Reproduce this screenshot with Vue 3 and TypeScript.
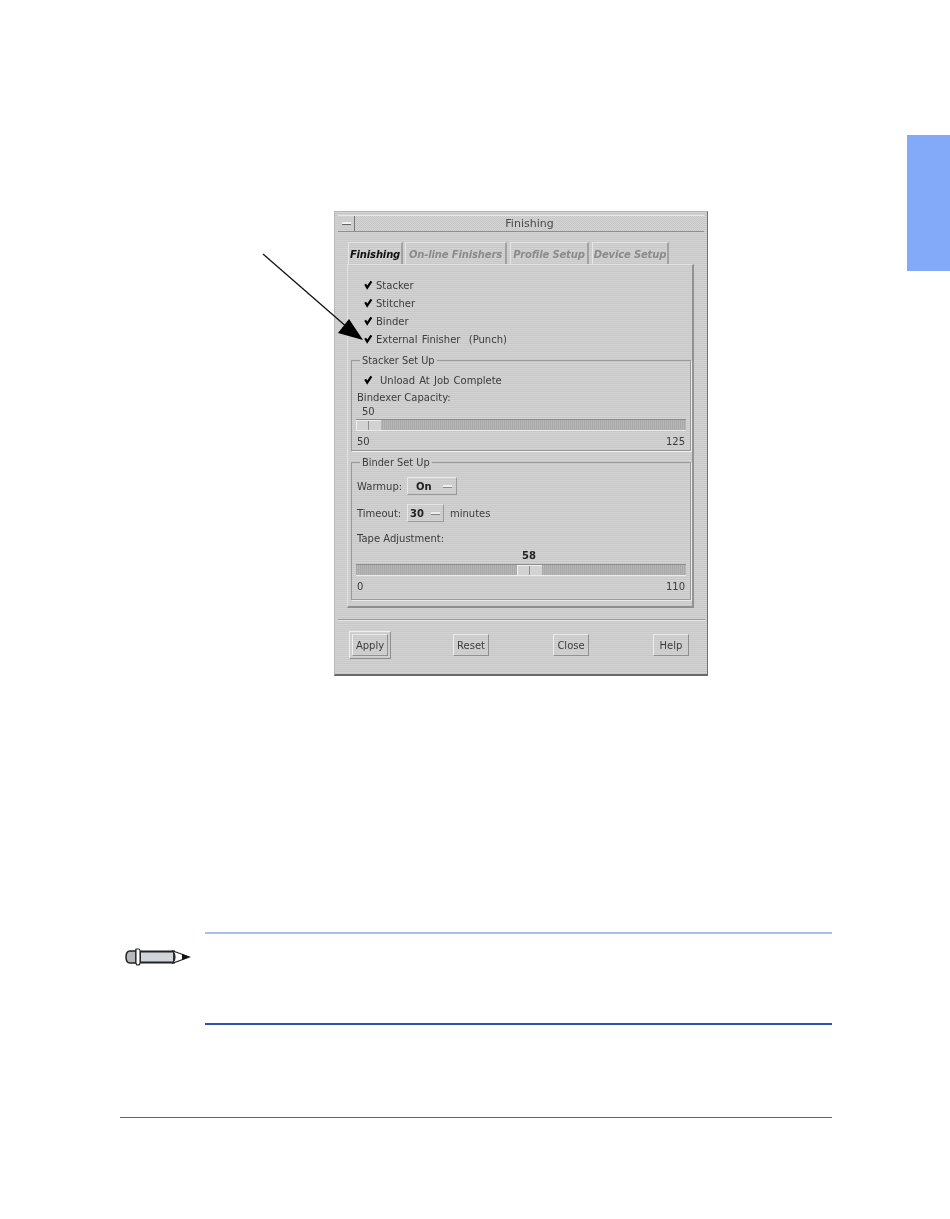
<template>
  <div class="page">
    <div class="side-tab"></div>

    <div class="window">
      <div class="titlebar">
        <div class="menu-btn"><span></span></div>
        <div class="title">Finishing</div>
      </div>

      <div class="client">
        <div class="tabs">
          <div v-for="(t, i) in tabs" :key="t.name" class="tab" :class="{ active: i === 0 }" :style="{ width: t.width + 'px' }">{{ t.name }}</div>
        </div>

        <div class="panel">
          <div class="checks">
            <div v-for="c in finishers" :key="c" class="check-row">
              <span class="tick">
                <svg width="10" height="10" viewBox="0 0 10 10"><path d="M2.2 4.2 L4.2 7.6 L8.4 1.4" fill="none" stroke="#000" stroke-width="2.2" /></svg>
              </span>
              <span>{{ c }}</span>
            </div>
          </div>

          <fieldset class="group stacker">
            <legend>Stacker Set Up</legend>
            <div class="check-row unload">
              <span class="tick">
                <svg width="10" height="10" viewBox="0 0 10 10"><path d="M2.2 4.2 L4.2 7.6 L8.4 1.4" fill="none" stroke="#000" stroke-width="2.2" /></svg>
              </span>
              <span>Unload At Job Complete</span>
            </div>
            <div class="field-label capacity">Bindexer Capacity:</div>
            <div class="value-left">50</div>
            <div class="slider">
              <div class="thumb" style="left: 0"></div>
            </div>
            <div class="scale"><span>50</span><span>125</span></div>
          </fieldset>

          <fieldset class="group binder">
            <legend>Binder Set Up</legend>
            <div class="option-row warmup">
              <span class="opt-label">Warmup:</span>
              <div class="dropdown wide"><b>On</b><i></i></div>
            </div>
            <div class="option-row timeout">
              <span class="opt-label">Timeout:</span>
              <div class="dropdown narrow"><b>30</b><i></i></div>
              <span class="unit">minutes</span>
            </div>
            <div class="field-label tape">Tape Adjustment:</div>
            <div class="value-center">58</div>
            <div class="slider tape-slider">
              <div class="thumb" :style="{ left: tapePos + 'px' }"></div>
            </div>
            <div class="scale"><span>0</span><span>110</span></div>
          </fieldset>
        </div>

        <div class="separator"></div>

        <div class="actions">
          <div class="default-ring"><button class="btn apply">Apply</button></div>
          <button class="btn">Reset</button>
          <button class="btn">Close</button>
          <button class="btn">Help</button>
        </div>
      </div>
    </div>

    <svg class="arrow" width="120" height="100" viewBox="0 0 120 100">
      <path d="M3 4 L88 78" stroke="#111" stroke-width="1.3" fill="none" />
      <path d="M103 90 L78 83 L89 69 Z" fill="#000" />
    </svg>

    <div class="note">
      <svg class="pencil" width="66" height="20" viewBox="0 0 66 20">
        <path d="M5 4 H11 V16 H5 Q1 16 1 10 Q1 4 5 4 Z" fill="#b4b8b8" stroke="#222" stroke-width="1.5" />
        <path d="M15 4.5 H49 V15.5 H15 Z" fill="#cfd5da" stroke="#222" stroke-width="1.8" />
        <path d="M11 3 Q10 2 12 2 H14 Q15 2 15 4 V16 Q15 18 13 18 Q11 18 11 16 Z" fill="#fff" stroke="#222" stroke-width="1.1" />
        <path d="M48 4 L64.5 10 L48 16 Q52 10 48 4 Z" fill="#fff" stroke="#222" stroke-width="1.2" />
        <path d="M57 6.8 L64.5 10 L57 13.2 Z" fill="#111" />
      </svg>
      <div class="note-body"></div>
    </div>

    <div class="footer-line"></div>
  </div>
</template>

<script setup lang="ts">
const tabs = [
  { name: 'Finishing', width: 55 },
  { name: 'On-line Finishers', width: 102 },
  { name: 'Profile Setup', width: 79 },
  { name: 'Device Setup', width: 77 },
]

const finishers = ['Stacker', 'Stitcher', 'Binder', 'External Finisher  (Punch)']

// thumb sits at the 58 of 110 position on the tape slider
const tapePos = 161
</script>

<style>
html,
body {
  margin: 0;
  background: #fff;
}
</style>

<style scoped>
.page {
  position: relative;
  width: 950px;
  height: 1219px;
  padding-top: 211px;
  box-sizing: border-box;
  overflow: hidden;
  background: #fff;
  font-family: "DejaVu Sans", sans-serif;
  font-size: 10px;
  color: #3c3c3c;
}

.side-tab {
  position: absolute;
  top: 135px;
  right: 0;
  width: 43px;
  height: 136px;
  background: #82aaf8;
}

/* the reference is a scanned screenshot, so the dialog is a bit soft */
.window {
  width: 374px;
  height: 465px;
  margin-left: 334px;
  box-sizing: border-box;
  padding: 3px;
  border-top: 1px solid #b4b4b4;
  border-left: 1px solid #b8b8b8;
  border-right: 1px solid #707070;
  border-bottom: 2px solid #6a6a6a;
  background: repeating-linear-gradient(180deg, #d3d3d3 0, #d3d3d3 1px, #c8c8c8 1px, #c8c8c8 2px);
  filter: blur(0.35px);
}

.titlebar {
  display: flex;
  box-sizing: border-box;
  height: 17px;
  border-bottom: 1px solid #8e8e8e;
  border-top: 1px solid #e8e8e8;
}

.menu-btn {
  display: flex;
  align-items: center;
  justify-content: center;
  width: 16px;
  border-right: 1px solid #777;
}

.menu-btn span {
  width: 9px;
  height: 2px;
  background: #f2f2f2;
  border-bottom: 1px solid #666;
}

.title {
  flex: 1;
  text-align: center;
  line-height: 16px;
  font-size: 11px;
  color: #4a4a4a;
  background: repeating-conic-gradient(#c4c4c4 0 25%, #d6d6d6 0 50%) 0 0 / 2px 2px;
}

.client {
  padding: 10px 9px 0;
}

.tabs {
  display: flex;
  gap: 3px;
  height: 22px;
  padding-left: 1px;
}

.tab {
  box-sizing: border-box;
  text-align: center;
  line-height: 23px;
  font-size: 10px;
  font-weight: 700;
  font-style: italic;
  color: #8b8b8b;
  letter-spacing: -0.15px;
  white-space: nowrap;
  border-top: 1px solid #e6e6e6;
  border-left: 1px solid #e6e6e6;
  border-right: 2px solid #a2a2a2;
}

.tab.active {
  color: #111;
  margin-right: -1px;
}

.panel {
  box-sizing: border-box;
  width: 347px;
  height: 344px;
  padding: 11px 3px 0;
  border-top: 1px solid #e2e2e2;
  border-left: 1px solid #e2e2e2;
  border-right: 2px solid #929292;
  border-bottom: 2px solid #8e8e8e;
}

.checks {
  padding-left: 12px;
  height: 79px;
}

.check-row {
  display: flex;
  align-items: center;
  height: 18px;
  white-space: pre;
  word-spacing: 1px;
}

.tick {
  display: flex;
  width: 10px;
  height: 10px;
  margin-right: 3px;
}

.group {
  box-sizing: border-box;
  width: 340px;
  margin: 0;
  padding: 0 4px;
  border: 1px solid #9a9a9a;
  box-shadow: 1px 1px 0 #ececec;
  min-width: 0;
}

.group legend {
  padding: 0 2px;
  margin-left: 4px;
  line-height: 11px;
  font-size: 9.8px;
}

.stacker {
  height: 96px;
}

.binder {
  height: 143px;
  margin-top: 6px;
}

.unload {
  padding-left: 7px;
  height: 20px;
  margin-top: 4px;
}

.unload .tick {
  margin-right: 7px;
}

.field-label {
  padding-left: 1px;
  line-height: 14px;
}

.capacity {
  margin-top: 1px;
}

.value-left {
  padding-left: 6px;
  line-height: 14px;
}

.slider {
  position: relative;
  height: 10px;
  border-top: 1px solid #8c8c8c;
  background: repeating-linear-gradient(90deg, #a9a9a9 0, #a9a9a9 1px, #b6b6b6 1px, #b6b6b6 2px);
  border-bottom: 1px solid #ececec;
}

.thumb {
  position: absolute;
  top: 0;
  bottom: 0;
  width: 25px;
  background: linear-gradient(90deg, transparent 12px, #8f8f8f 12px, #8f8f8f 13px, transparent 13px), #d2d2d2;
  box-shadow: inset 1px 1px 0 #eee;
}

.scale {
  display: flex;
  justify-content: space-between;
  padding: 0 1px;
  line-height: 14px;
  margin-top: 4px;
}

.option-row {
  display: flex;
  align-items: center;
}

.warmup {
  height: 18px;
  margin-top: 9px;
}

.timeout {
  height: 18px;
  margin-top: 9px;
}

.opt-label {
  box-sizing: border-box;
  width: 51px;
  padding-left: 1px;
}

.dropdown {
  display: flex;
  align-items: center;
  box-sizing: border-box;
  height: 18px;
  border-top: 1px solid #e6e6e6;
  border-left: 1px solid #e6e6e6;
  border-right: 1px solid #9a9a9a;
  border-bottom: 1px solid #9a9a9a;
}

.dropdown b {
  font-size: 10px;
  color: #222;
}

.dropdown i {
  display: block;
  width: 9px;
  height: 2px;
  background: #eee;
  border-bottom: 1px solid #888;
}

.dropdown.wide {
  width: 50px;
  padding-left: 8px;
}

.dropdown.wide i {
  margin-left: 11px;
}

.dropdown.narrow {
  width: 37px;
  padding-left: 2px;
}

.dropdown.narrow i {
  margin-left: 7px;
}

.unit {
  margin-left: 6px;
}

.tape {
  margin-top: 10px;
}

.value-center {
  margin-top: 3px;
  padding-left: 16px;
  text-align: center;
  font-weight: 700;
  color: #222;
  line-height: 14px;
}

.tape-slider {
  margin-top: 1px;
}

.separator {
  width: 367px;
  margin: 11px 0 0 -9px;
  border-top: 1px solid #999;
  border-bottom: 1px solid #eaeaea;
}

.actions {
  display: flex;
  align-items: center;
  gap: 64px;
  height: 26px;
  margin: 11px 0 0 2px;
}

.default-ring {
  display: flex;
  margin-right: -2px;
  padding: 2px;
  border-top: 1px solid #efefef;
  border-left: 1px solid #efefef;
  border-right: 1px solid #8f8f8f;
  border-bottom: 1px solid #8f8f8f;
}

.btn {
  box-sizing: border-box;
  width: 36px;
  height: 22px;
  padding: 0;
  font: inherit;
  color: #3c3c3c;
  background: transparent;
  border-top: 1px solid #ededed;
  border-left: 1px solid #ededed;
  border-right: 1px solid #8f8f8f;
  border-bottom: 1px solid #8f8f8f;
}

.arrow {
  position: absolute;
  left: 260px;
  top: 250px;
}

.note {
  display: flex;
  width: 712px;
  margin: 256px 0 0 120px;
}

.pencil {
  flex: none;
  margin: 15px 0 0 5px;
}

.note-body {
  flex: 1;
  height: 89px;
  margin-left: 14px;
  border-top: 2px solid #a9bcf5;
  border-bottom: 2px solid #2a54b0;
}

.footer-line {
  width: 712px;
  margin: 92px 0 0 120px;
  border-top: 1px solid #1f74b8;
}
</style>
